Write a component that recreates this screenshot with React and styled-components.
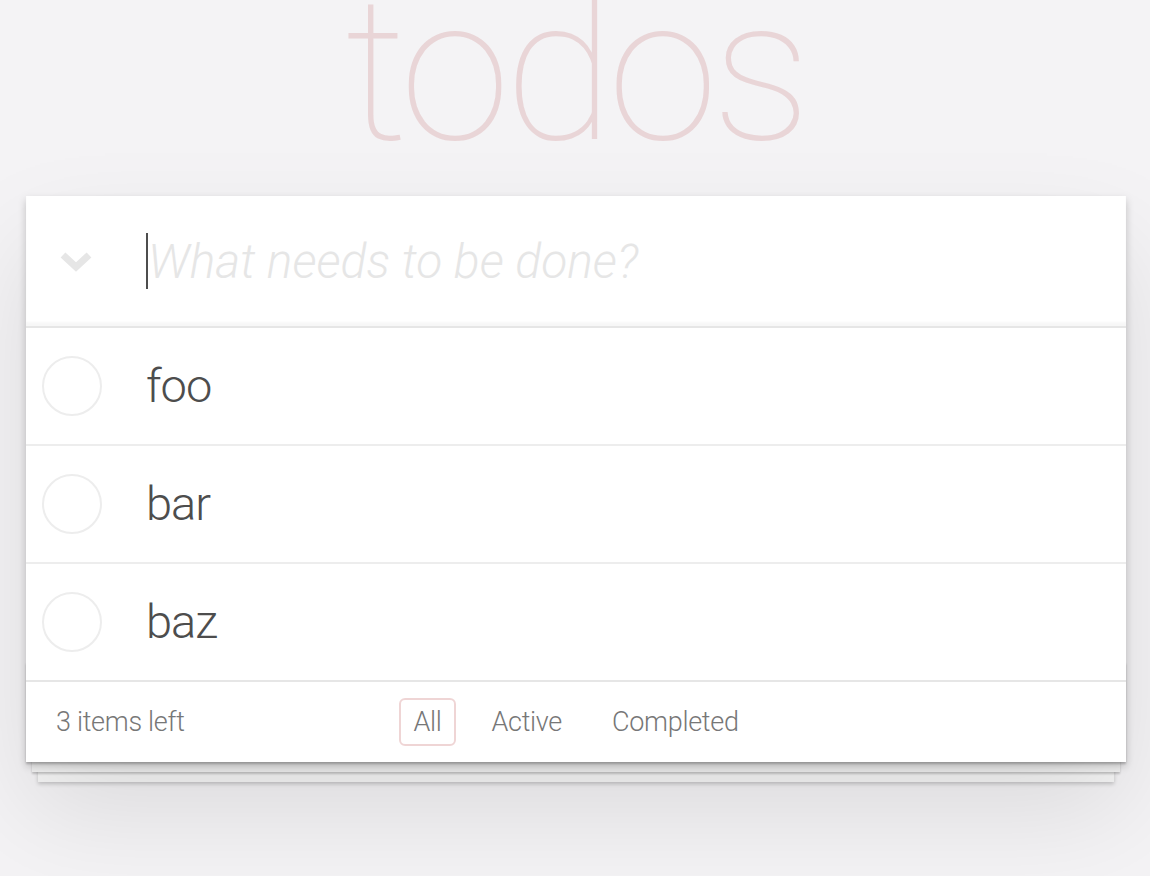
import React, { useState } from 'react';
import styled, { createGlobalStyle } from 'styled-components';

const GlobalStyle = createGlobalStyle`
  html, body {
    margin: 0;
    padding: 0;
  }
  body {
    background: #f4f3f5;
    color: #4d4d4d;
    font-family: "Helvetica Neue", Roboto, "Liberation Sans", sans-serif;
    font-weight: 300;
    -webkit-font-smoothing: antialiased;
    overflow: hidden;
  }
`;

const Page = styled.div`
  display: flex;
  flex-direction: column;
  align-items: center;
  height: 876px;
  overflow: hidden;
`;

const Title = styled.h1`
  margin: -29px 0 0 0;
  height: 225px;
  font-size: 200px;
  line-height: 200px;
  font-weight: 100;
  color: rgba(175, 47, 47, 0.15);
  letter-spacing: -6px;
  text-align: center;
`;

const Card = styled.section`
  position: relative;
  width: 1100px;
  margin-left: 2px;
  background: #fff;
  box-shadow: 0 4px 8px 0 rgba(0, 0, 0, 0.2), 0 50px 100px 0 rgba(0, 0, 0, 0.1);
`;

const Header = styled.header`
  display: flex;
  align-items: center;
  height: 130px;
  box-shadow: inset 0 -4px 2px rgba(0, 0, 0, 0.03);
`;

const ToggleAll = styled.div`
  width: 100px;
  display: flex;
  justify-content: center;
  align-items: center;
  padding-top: 2px;
`;

const InputWrap = styled.div`
  flex: 1;
  display: flex;
  align-items: center;
  padding-left: 20px;
`;

const Caret = styled.span`
  width: 2px;
  height: 56px;
  background: #4d4d4d;
`;

const NewTodo = styled.input`
  flex: 1;
  border: none;
  outline: none;
  background: transparent;
  padding: 0;
  font-family: inherit;
  font-size: 48px;
  font-weight: 300;
  color: #4d4d4d;
  &::placeholder {
    font-style: italic;
    color: #e6e6e6;
  }
`;

const List = styled.ul`
  margin: 0;
  padding: 0;
  list-style: none;
  border-top: 2px solid #e6e6e6;
`;

const Item = styled.li`
  display: flex;
  align-items: center;
  height: 116px;
  padding-left: 16px;
  border-bottom: 2px solid #ededed;
  &:last-child {
    border-bottom: none;
  }
`;

const Circle = styled.span`
  box-sizing: border-box;
  width: 60px;
  height: 60px;
  border-radius: 50%;
  border: 2px solid #ededed;
`;

const Label = styled.label`
  margin-left: 44px;
  font-size: 47px;
  line-height: 1.2;
  letter-spacing: -1px;
  color: #4d4d4d;
`;

const Footer = styled.footer`
  position: relative;
  display: grid;
  grid-template-columns: 1fr auto 1fr;
  align-items: center;
  height: 80px;
  padding: 0 30px;
  border-top: 2px solid #e6e6e6;
  font-size: 27px;
  letter-spacing: -0.3px;
  color: #777;

  &::before {
    content: '';
    position: absolute;
    left: 0;
    right: 0;
    bottom: 0;
    height: 100px;
    z-index: -1;
    box-shadow: 0 2px 2px rgba(0, 0, 0, 0.2), 0 16px 0 -6px #f6f6f6,
      0 18px 2px -6px rgba(0, 0, 0, 0.2), 0 32px 0 -12px #f6f6f6,
      0 34px 4px -12px rgba(0, 0, 0, 0.2);
  }
`;

const Count = styled.span`
  justify-self: start;
`;

const Filters = styled.ul`
  display: flex;
  gap: 10px;
  margin: 0;
  padding: 0;
  list-style: none;
`;

const FilterLink = styled.a`
  display: block;
  margin: 0 6px;
  padding: 5px 12px;
  line-height: 34px;
  color: inherit;
  text-decoration: none;
  border: 2px solid ${(props) => (props.selected ? 'rgba(175, 47, 47, 0.2)' : 'transparent')};
  border-radius: 6px;
  cursor: pointer;
`;

const Chevron = () => (
  <svg width="32" height="21" viewBox="0 0 32 21">
    <path d="M3 3 L16 15 L29 3" fill="none" stroke="#e6e6e6" strokeWidth="7" />
  </svg>
);

const todos = ['foo', 'bar', 'baz'];

const filters = [
  ['all', 'All'],
  ['active', 'Active'],
  ['completed', 'Completed'],
];

export default function App() {
  const [filter, setFilter] = useState('all');
  return (
    <>
      <GlobalStyle />
      <Page>
        <Title>todos</Title>
        <Card>
          <Header>
            <ToggleAll>
              <Chevron />
            </ToggleAll>
            <InputWrap>
              <Caret />
              <NewTodo placeholder="What needs to be done?" />
            </InputWrap>
          </Header>
          <List>
            {todos.map((t) => (
              <Item key={t}>
                <Circle />
                <Label>{t}</Label>
              </Item>
            ))}
          </List>
          <Footer>
            <Count>3 items left</Count>
            <Filters>
              {filters.map(([key, text]) => (
                <li key={key}>
                  <FilterLink selected={filter === key} onClick={() => setFilter(key)}>
                    {text}
                  </FilterLink>
                </li>
              ))}
            </Filters>
            <span />
          </Footer>
        </Card>
      </Page>
    </>
  );
}
